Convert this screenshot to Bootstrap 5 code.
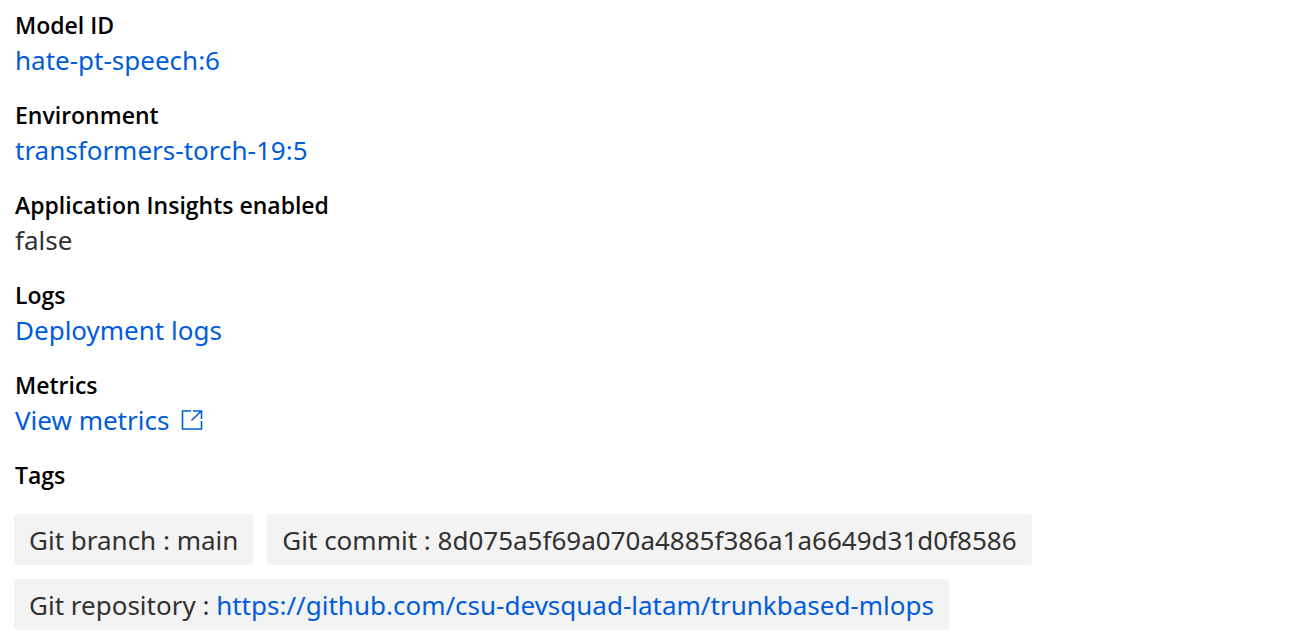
<!DOCTYPE html>
<html lang="en">
<head>
<meta charset="utf-8">
<meta name="viewport" content="width=device-width, initial-scale=1">
<title>Deployment details</title>
<link href="https://cdn.jsdelivr.net/npm/bootstrap@5.3.0/dist/css/bootstrap.min.css" rel="stylesheet">
<style>
body { font-family: "Noto Sans", "Open Sans", sans-serif; font-size: 26px; line-height: 40px; color: #323130; background: #fff; }
a { color: #015cda; text-decoration: none; }
a:hover { text-decoration: underline; }
.details { padding: 5px 15px 14px; }
.details dt { font-family: "Open Sans", "Noto Sans", sans-serif; font-size: 23px; font-weight: 600; line-height: 40px; color: #000; }
.details dd { margin: 0 0 20px; line-height: 30px; }
.tag-list { margin: 0 -1px; padding-top: 19px; gap: 14px; }
.tag-item { background: #f3f3f3; border-radius: 3px; padding: 6px 15px 5px; }
.metrics-link { gap: 12px; }
</style>
</head>
<body>
<main class="details">
<dl class="mb-0">
<dt>Model ID</dt><dd><a href="#">hate-pt-speech:6</a></dd>
<dt>Environment</dt><dd><a href="#">transformers-torch-19:5</a></dd>
<dt>Application Insights enabled</dt><dd>false</dd>
<dt>Logs</dt><dd><a href="#">Deployment logs</a></dd>
<dt>Metrics</dt><dd class="d-flex"><a href="#" class="metrics-link d-inline-flex align-items-center">View metrics
<svg width="22" height="20" viewBox="0 0 22 20" fill="none" stroke="currentColor" stroke-width="1.6" aria-hidden="true"><path d="M10 1H1.5v18h19V11M12 1h8.5v8M20 1.2 10.5 10.5"/></svg></a></dd>
<dt>Tags</dt>
</dl>
<ul class="tag-list list-unstyled d-flex flex-wrap mb-0">
<li class="tag-item">Git branch : main</li>
<li class="tag-item">Git commit : 8d075a5f69a070a4885f386a1a6649d31d0f8586</li>
<li class="tag-item">Git repository : <a href="#">https://github.com/csu-devsquad-latam/trunkbased-mlops</a></li>
</ul>
</main>
<script src="https://cdn.jsdelivr.net/npm/bootstrap@5.3.0/dist/js/bootstrap.bundle.min.js"></script>
</body>
</html>
